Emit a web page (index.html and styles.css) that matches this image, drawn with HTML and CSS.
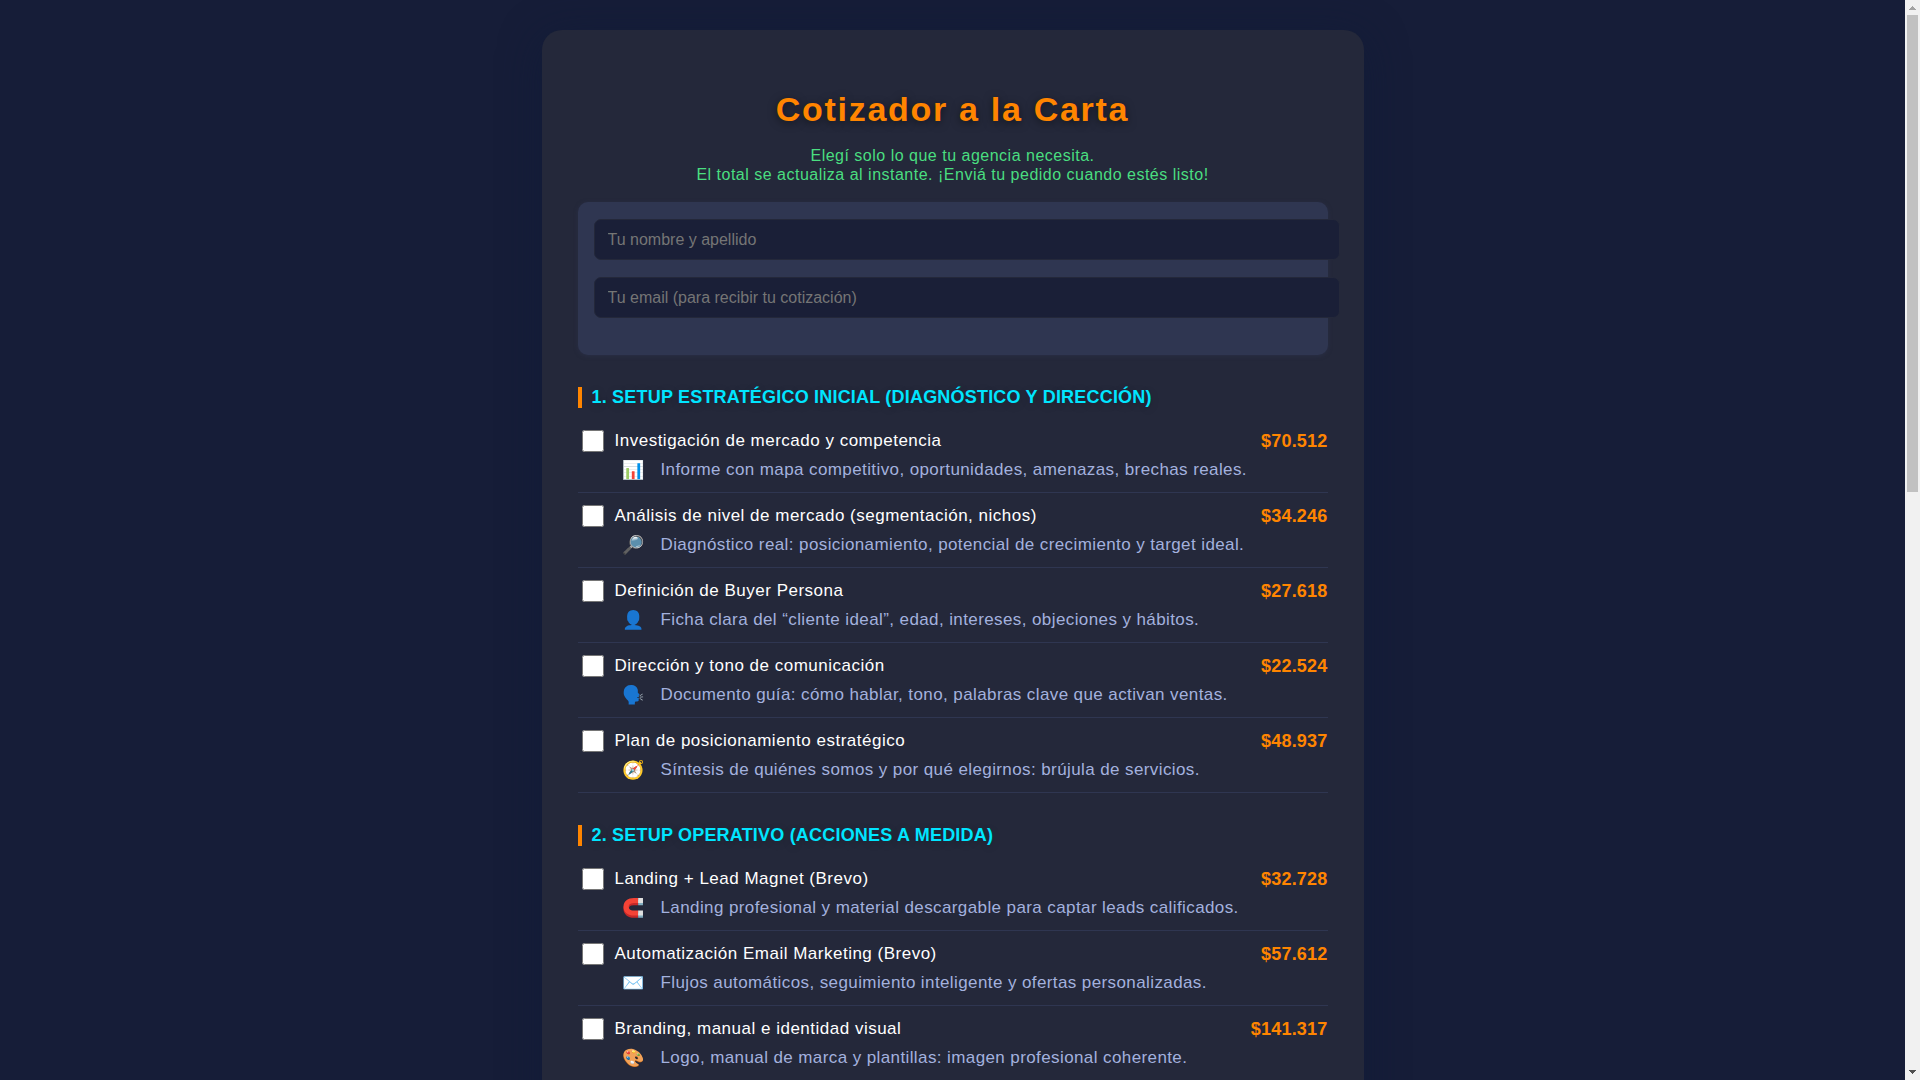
FILE: index.html
```html
<!DOCTYPE html>
<html lang="es">
<head>
  <meta charset="UTF-8">
  <title>Cotizador a la Carta</title>
  <meta name="viewport" content="width=device-width, initial-scale=1.0">
  <link rel="stylesheet" href="styles.css">
</head>
<body>
  <div class="pagina">
  <main class="container">
    <h1>Cotizador a la Carta</h1>
    <p class="subtitle">Elegí solo lo que tu agencia necesita.<br>El total se actualiza al instante. ¡Enviá tu pedido cuando estés listo!</p>

    <form>
      <!-- Datos de contacto -->
      <div class="datos">
        <input type="text" name="nombre" aria-label="Tu nombre y apellido" placeholder="Tu nombre y apellido">
        <input type="email" name="email" aria-label="Tu email" placeholder="Tu email (para recibir tu cotización)">
      </div>

      <section>
        <h2>1. SETUP ESTRATÉGICO INICIAL (DIAGNÓSTICO Y DIRECCIÓN)</h2>
        <div class="item">
          <input type="checkbox" id="s1" value="70512">
          <label for="s1">Investigación de mercado y competencia</label>
          <span class="precio">$70.512</span>
          <div class="desc"><span class="icono">📊</span>Informe con mapa competitivo, oportunidades, amenazas, brechas reales.</div>
        </div>
        <div class="item">
          <input type="checkbox" id="s2" value="34246">
          <label for="s2">Análisis de nivel de mercado (segmentación, nichos)</label>
          <span class="precio">$34.246</span>
          <div class="desc"><span class="icono">🔎</span>Diagnóstico real: posicionamiento, potencial de crecimiento y target ideal.</div>
        </div>
        <div class="item">
          <input type="checkbox" id="s3" value="27618">
          <label for="s3">Definición de Buyer Persona</label>
          <span class="precio">$27.618</span>
          <div class="desc"><span class="icono">👤</span>Ficha clara del “cliente ideal”, edad, intereses, objeciones y hábitos.</div>
        </div>
        <div class="item">
          <input type="checkbox" id="s4" value="22524">
          <label for="s4">Dirección y tono de comunicación</label>
          <span class="precio">$22.524</span>
          <div class="desc"><span class="icono">🗣️</span>Documento guía: cómo hablar, tono, palabras clave que activan ventas.</div>
        </div>
        <div class="item">
          <input type="checkbox" id="s5" value="48937">
          <label for="s5">Plan de posicionamiento estratégico</label>
          <span class="precio">$48.937</span>
          <div class="desc"><span class="icono">🧭</span>Síntesis de quiénes somos y por qué elegirnos: brújula de servicios.</div>
        </div>
      </section>

      <section>
        <h2>2. SETUP OPERATIVO (ACCIONES A MEDIDA)</h2>
        <div class="item">
          <input type="checkbox" id="o1" value="32728">
          <label for="o1">Landing + Lead Magnet (Brevo)</label>
          <span class="precio">$32.728</span>
          <div class="desc"><span class="icono">🧲</span>Landing profesional y material descargable para captar leads calificados.</div>
        </div>
        <div class="item">
          <input type="checkbox" id="o2" value="57612">
          <label for="o2">Automatización Email Marketing (Brevo)</label>
          <span class="precio">$57.612</span>
          <div class="desc"><span class="icono">✉️</span>Flujos automáticos, seguimiento inteligente y ofertas personalizadas.</div>
        </div>
        <div class="item">
          <input type="checkbox" id="o3" value="141317">
          <label for="o3">Branding, manual e identidad visual</label>
          <span class="precio">$141.317</span>
          <div class="desc"><span class="icono">🎨</span>Logo, manual de marca y plantillas: imagen profesional coherente.</div>
        </div>
      </section>
    </form>
  </main>
  </div>

  <div class="scrollbar" aria-hidden="true">
    <svg width="15" height="15" viewBox="0 0 15 15" shape-rendering="crispEdges"><path d="M4 10h7V9h-1V8H9V7H8V6H7v1H6v1H5v1H4z" fill="#a3a3a3"/></svg>
    <div class="track"><div class="thumb"></div></div>
    <svg width="15" height="15" viewBox="0 0 15 15" shape-rendering="crispEdges"><path d="M4 5h7v1h-1v1H9v1H8v1H7V8H6V7H5V6H4z" fill="#505050"/></svg>
  </div>
</body>
</html>
```
FILE: styles.css
```css
body {
  display: flex;
  height: 100vh;
  margin: 0;
  background: #161d38;
  color: #fff;
  font-family: 'Liberation Sans', Arial, sans-serif;
}

.pagina {
  flex: 1;
  overflow-y: auto;
  scrollbar-width: none;
}
.container {
  max-width: 750px;
  min-height: 210vh;
  margin: 30px auto;
  padding: 36px;
  background: #24283a;
  border-radius: 20px;
  box-shadow: 0 8px 40px rgba(16, 27, 56, 0.8);
}

h1 {
  margin: 24px 0 17px;
  color: #ff8500;
  font-size: 34px;
  line-height: 39px;
  letter-spacing: 0.05em;
  text-align: center;
  text-shadow: 0 2px 8px rgba(0, 0, 0, 0.5);
}
.subtitle {
  margin: 0 0 18px;
  color: #4ade80;
  font-size: 16px;
  line-height: 19px;
  letter-spacing: 0.5px;
  text-align: center;
}

/* Contact box: the inputs run past its right edge */
.datos {
  padding: 17px 16px 20px;
  background: #2f3651;
  border-radius: 10px;
  box-shadow: 0 1px 4px rgba(47, 54, 81, 0.5);
}
.datos input {
  display: block;
  width: 100%;
  height: 19px;
  margin-bottom: 17px;
  padding: 10px 13px;
  border: 1px solid #24283a;
  border-radius: 7px;
  background: #1a1f37;
  color: #fff;
  font-family: inherit;
  font-size: 16px;
}
.datos input::placeholder {
  color: #757575;
}

h2 {
  margin: 32px 0 10px;
  padding-left: 10px;
  border-left: 4px solid #ff8500;
  color: #00e5ff;
  font-size: 18px;
  line-height: 21px;
  letter-spacing: 0.2px;
  text-shadow: 0 2px 8px rgba(0, 0, 0, 0.2);
}

/* Service rows */
.item {
  display: grid;
  grid-template-columns: auto 1fr auto;
  align-items: center;
  row-gap: 5px;
  padding: 12px 0 9px;
  border-bottom: 1px solid #2f3651;
}
.item input {
  width: 22px;
  height: 22px;
  margin: 0 11px 0 4px;
}
.item label {
  font-size: 17px;
  letter-spacing: 0.5px;
}
.precio {
  color: #ff8500;
  font-size: 18px;
  font-weight: bold;
  letter-spacing: 0.2px;
}
.desc {
  grid-column: 1 / -1;
  display: flex;
  align-items: center;
  padding-left: 44px;
  color: #a3b1de;
  font-size: 17px;
  line-height: 26px;
  letter-spacing: 0.4px;
}
.icono {
  width: 39px;
  font-size: 18px;
}

/* Scrollbar */
.scrollbar {
  display: flex;
  flex-direction: column;
  width: 15px;
  background: #f1f1f1;
}
.track {
  flex: 1;
  padding: 0 2px;
}
.thumb {
  height: 45.4%;
  background: #c1c1c1;
}
```
